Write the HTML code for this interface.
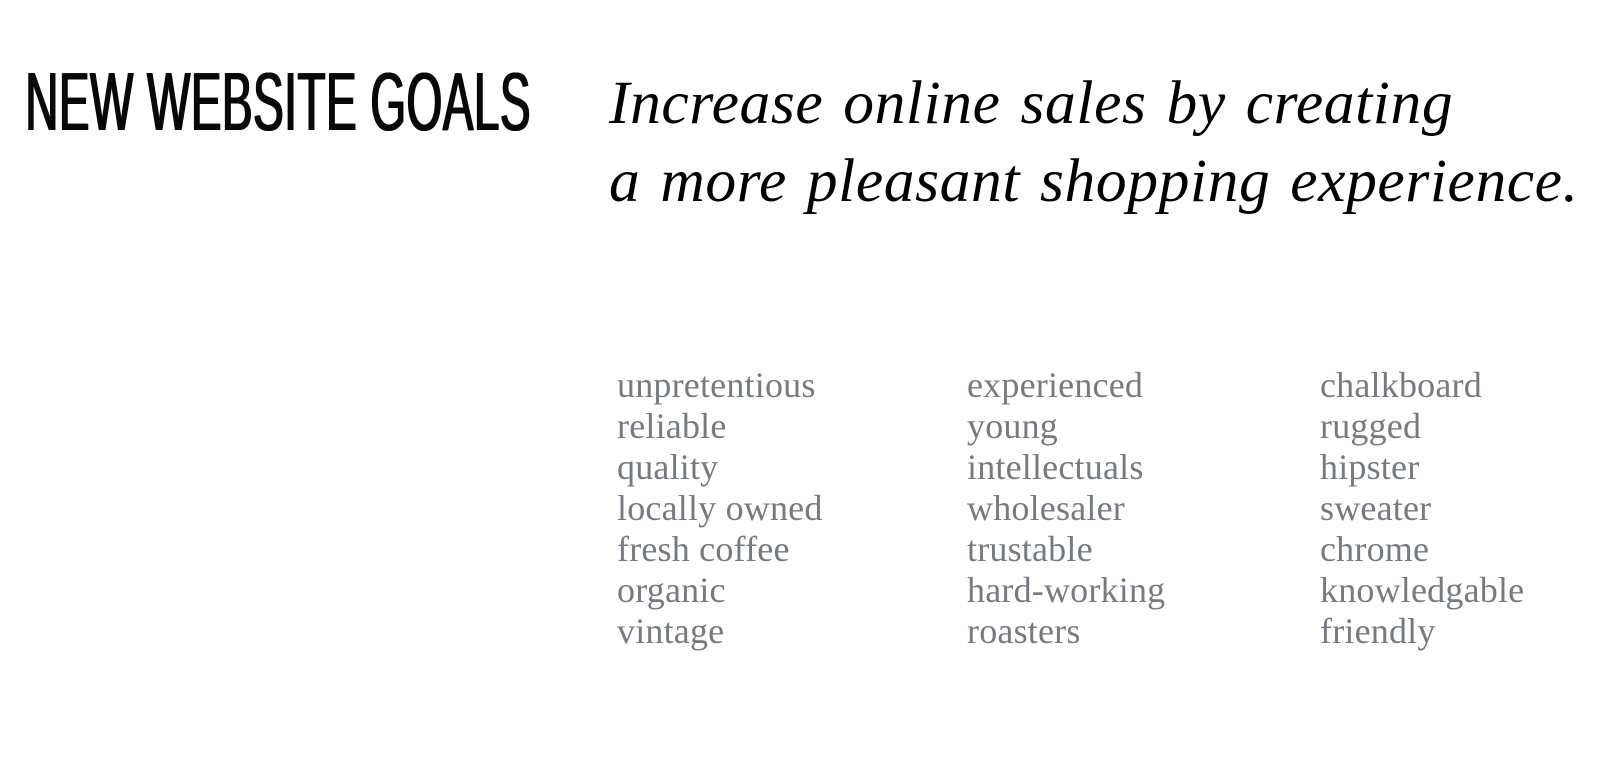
<!DOCTYPE html>
<html><head><meta charset="utf-8"><style>
html,body{margin:0;padding:0;background:#fff;width:1600px;height:769px;overflow:hidden;position:relative}
.h{position:absolute;left:25px;top:60px;font:normal 83px/1 "Liberation Sans",sans-serif;color:#070909;transform:scaleX(0.552);transform-origin:left top;white-space:nowrap;letter-spacing:1px;text-shadow:2px 0 0 #070909,-1px 0 0 #070909}
.t{position:absolute;left:609px;top:64px;font:italic 61.5px/78px "Liberation Serif",serif;color:#000;white-space:nowrap;letter-spacing:0.6px;word-spacing:4px}
.c{position:absolute;top:365px;font:36px/41px "Liberation Serif",serif;color:#767a83;white-space:nowrap;letter-spacing:0.2px}
</style></head><body>
<div class="h">NEW WEBSITE GOALS</div>
<div class="t">Increase online sales by creating<br>a more pleasant shopping experience.</div>
<div class="c" style="left:617px">unpretentious<br>reliable<br>quality<br>locally owned<br>fresh coffee<br>organic<br>vintage</div>
<div class="c" style="left:967px">experienced<br>young<br>intellectuals<br>wholesaler<br>trustable<br>hard-working<br>roasters</div>
<div class="c" style="left:1320px">chalkboard<br>rugged<br>hipster<br>sweater<br>chrome<br>knowledgable<br>friendly</div>
</body></html>
